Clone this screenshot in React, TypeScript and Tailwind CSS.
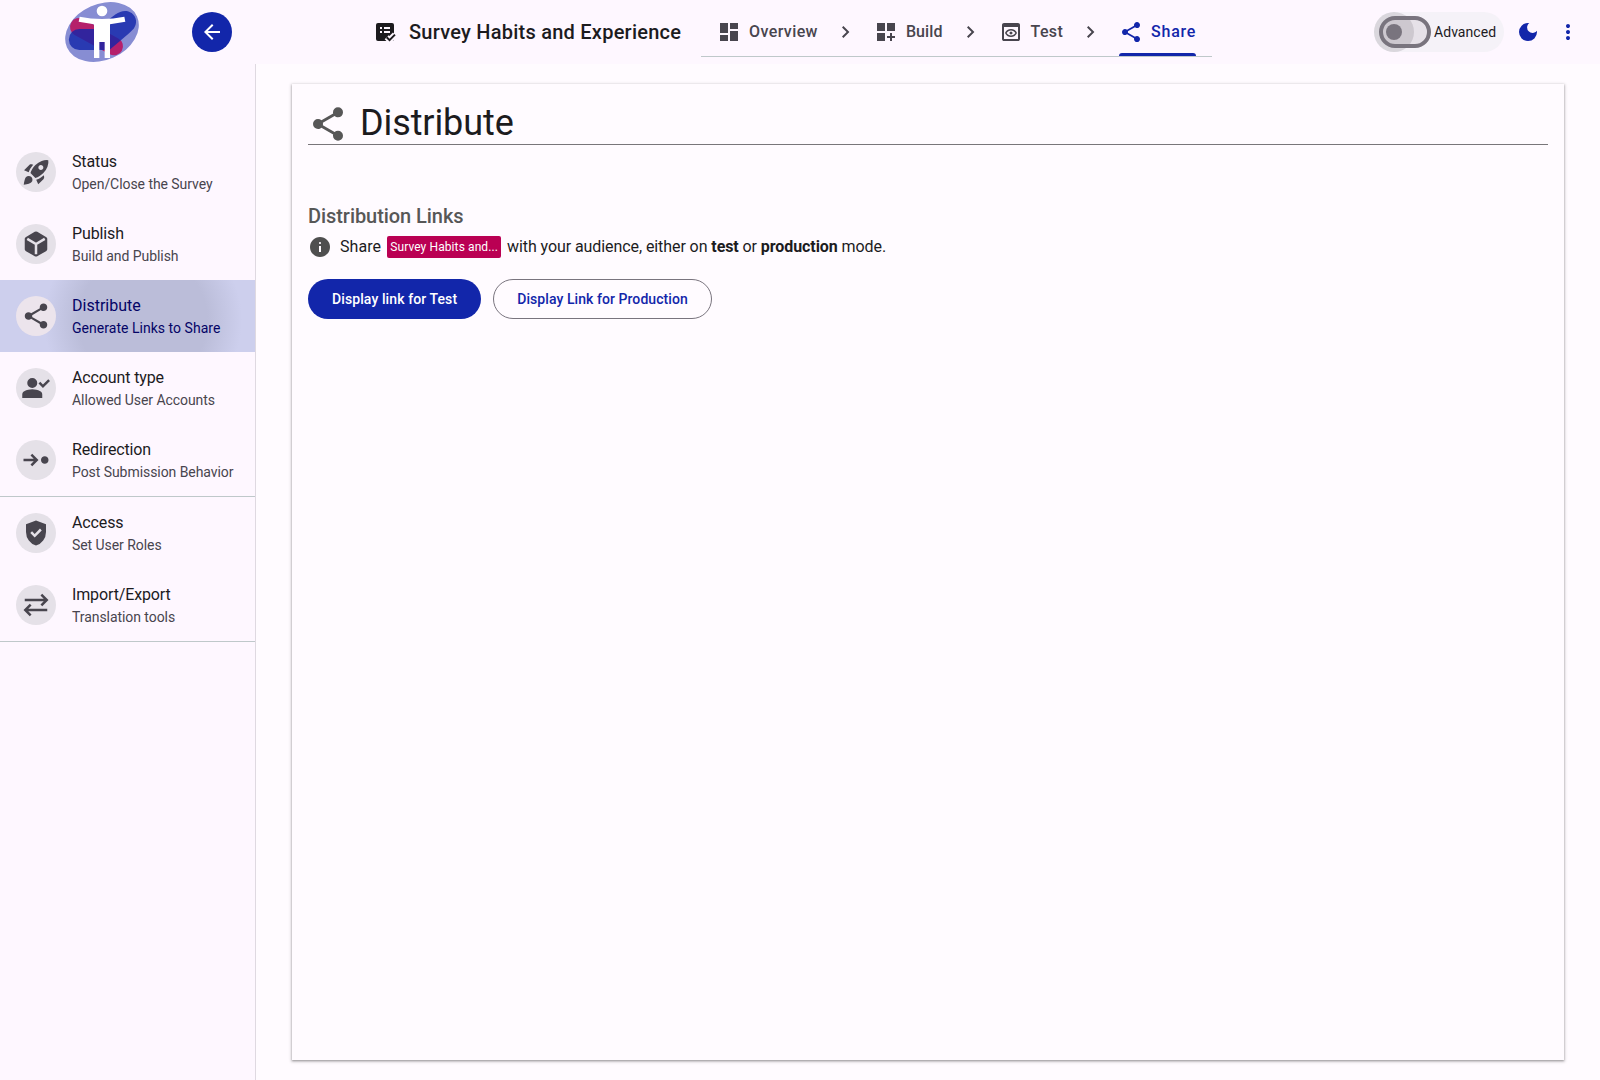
import React, { useState } from 'react';
import clsx from 'clsx';

const ICONS = {
  rocket:
    'm98-537 168-168q14-14 33-20t39-2l52 11q-54 64-85 116t-60 126L98-537Zm205 91q23-72 62.5-136T461-702q88-88 201-131.5T873-860q17 98-26 211T716-448q-55 55-120 95.5T459-289L303-446Zm276-120q23 23 56.5 23t56.5-23q23-23 23-56.5T692-679q-23-23-56.5-23T579-679q-23 23-23 56.5t23 56.5ZM551-85l-64-147q74-29 126.5-60T730-377l10 52q4 20-2 39.5T718-252L551-85ZM162-318q35-35 85-35.5t85 34.5q35 35 35 85t-35 85q-25 25-83.5 43T87-74q14-103 32-161t43-83Z',
  share:
    'M720-80q-50 0-85-35t-35-85q0-7 1-14.5t3-13.5L322-392q-17 15-38 23.5t-44 8.5q-50 0-85-35t-35-85q0-50 35-85t85-35q23 0 44 8.5t38 23.5l282-164q-2-6-3-13.5t-1-14.5q0-50 35-85t85-35q50 0 85 35t35 85q0 50-35 85t-85 35q-23 0-44-8.5T638-672L356-508q2 6 3 13.5t1 14.5q0 7-1 14.5t-3 13.5l282 164q17-15 38-23.5t44-8.5q50 0 85 35t35 85q0 50-35 85t-85 35Z',
  cube: 'M440-91 160-252q-19-11-29.5-29T120-321v-318q0-22 10.5-40t29.5-29l280-161q19-11 40-11t40 11l280 161q19 11 29.5 29t10.5 40v318q0 22-10.5 40T800-252L520-91q-19 11-40 11t-40-11Z',
  personCheck:
    'M702-480 560-622l57-56 85 85 170-170 56 57-226 226Zm-342 0q-66 0-113-47t-47-113q0-66 47-113t113-47q66 0 113 47t47 113q0 66-47 113t-113 47ZM40-160v-112q0-34 17.5-62.5T104-378q62-31 126-46.5T360-440q66 0 130 15.5T616-378q29 15 46.5 43.5T680-272v112H40Z',
  stepInto:
    'M360-280 304-337l103-103H80v-80h327L304-624l56-56 200 200-200 200Zm400-80q-50 0-85-35t-35-85q0-50 35-85t85-35q50 0 85 35t35 85q0 50-35 85t-85 35Z',
  shield:
    'm438-338 226-226-57-57-169 169-84-84-57 57 141 141Zm42 258q-139-35-229.5-159.5T160-516v-244l320-120 320 120v244q0 152-90.5 276.5T480-80Z',
  swap: 'M280-120 80-320l200-200 57 56-104 104h607v80H233l104 104-57 56Zm400-320-57-56 104-104H120v-80h607L623-784l57-56 200 200-200 200Z',
  dashboard: 'M520-600v-240h320v240H520ZM120-440v-400h320v400H120Zm400 320v-400h320v400H520Zm-400 0v-240h320v240H120Z',
  customize:
    'M120-840h320v320H120v-320Zm400 0h320v320H520v-320ZM120-440h320v320H120v-320Zm520 0h80v120h120v80H720v120h-80v-120H520v-80h120v-120Z',
  preview:
    'M200-120q-33 0-56.5-23.5T120-200v-560q0-33 23.5-56.5T200-840h560q33 0 56.5 23.5T840-760v560q0 33-23.5 56.5T760-120H200Zm0-80h560v-480H200v480Zm280-80q-82 0-146.5-44.5T240-440q29-71 93.5-115.5T480-600q82 0 146.5 44.5T720-440q-29 71-93.5 115.5T480-280Zm0-60q56 0 102-26.5t72-73.5q-26-47-72-73.5T480-540q-56 0-102 26.5T306-440q26 47 72 73.5T480-340Zm0-40q25 0 42.5-17.5T540-440q0-25-17.5-42.5T480-500q-25 0-42.5 17.5T420-440q0 25 17.5 42.5T480-380Z',
  chevron: 'M504-480 320-664l56-56 240 240-240 240-56-56 184-184Z',
  back: 'm313-440 224 224-57 56-320-320 320-320 57 56-224 224h487v80H313Z',
  moon: 'M480-120q-150 0-255-105T120-480q0-150 105-255t255-105q14 0 27.5 1t26.5 3q-41 29-65.5 75.5T444-660q0 90 63 153t153 63q55 0 101-24.5t75-65.5q2 13 3 26.5t1 27.5q0 150-105 255T480-120Z',
  more: 'M480-160q-33 0-56.5-23.5T400-240q0-33 23.5-56.5T480-320q33 0 56.5 23.5T560-240q0 33-23.5 56.5T480-160Zm0-240q-33 0-56.5-23.5T400-480q0-33 23.5-56.5T480-560q33 0 56.5 23.5T560-480q0 33-23.5 56.5T480-400Zm0-240q-33 0-56.5-23.5T400-720q0-33 23.5-56.5T480-800q33 0 56.5 23.5T560-720q0 33-23.5 56.5T480-640Z',
  info: 'M440-280h80v-240h-80v240Zm40-320q17 0 28.5-11.5T520-640q0-17-11.5-28.5T480-680q-17 0-28.5 11.5T440-640q0 17 11.5 28.5T480-600Zm0 520q-83 0-156-31.5T197-197q-54-54-85.5-127T80-480q0-83 31.5-156T197-763q54-54 127-85.5T480-880q83 0 156 31.5T763-763q54 54 85.5 127T880-480q0 83-31.5 156T763-197q-54 54-127 85.5T480-80Z',
};

type IconName = keyof typeof ICONS;

const Icon: React.FC<{ name: IconName; className?: string }> = ({ name, className }) => (
  <svg viewBox="0 -960 960 960" className={clsx('shrink-0 fill-current', className)}>
    <path d={ICONS[name]} />
    {name === 'cube' && (
      <path d="M200-642 480-480 760-642M480-480v330" fill="none" stroke="#e5e1e8" strokeWidth="80" />
    )}
  </svg>
);

const SurveyIcon: React.FC = () => (
  <svg viewBox="0 -960 960 960" className="h-6 w-6 shrink-0 fill-current">
    <rect x="120" y="-840" width="720" height="720" rx="80" />
    <path d="M280-680h80v80h-80zM280-520h80v80h-80zM440-680h240v80H440zM440-520h240v80H440z" fill="#fef7ff" />
    <path d="m548-268 113 112 218-218" fill="none" stroke="#fef7ff" strokeWidth="230" />
    <path d="m548-268 113 112 218-218" fill="none" stroke="currentColor" strokeWidth="80" />
  </svg>
);

const Logo: React.FC = () => (
  <svg viewBox="192 3 228 186" className="h-[62px] w-[76px]">
    <ellipse cx="306" cy="96" rx="115" ry="84" transform="rotate(-24 306 96)" fill="#878dd3" />
    <path d="M237 81 342 139" stroke="#b5206b" strokeWidth="54" strokeLinecap="round" />
    <path
      d="M238 87H288L347 43C362 32 380 29 395 39C411 51 412 72 401 86C392 96 372 112 328 150H238A31 31 0 0 1 238 87Z"
      fill="#1226aa"
      fillOpacity="0.8"
    />
    <circle cx="306" cy="33" r="16" fill="#fff" />
    <path d="M239 50Q306 64 373 50L376 65 330 73V174H314V126H298V174H282V73L236 65Z" fill="#fff" />
  </svg>
);

interface MenuItem {
  title: string;
  subtitle: string;
  icon: IconName;
  divider?: boolean;
}

const menuItems: MenuItem[] = [
  { title: 'Status', subtitle: 'Open/Close the Survey', icon: 'rocket' },
  { title: 'Publish', subtitle: 'Build and Publish', icon: 'cube' },
  { title: 'Distribute', subtitle: 'Generate Links to Share', icon: 'share' },
  { title: 'Account type', subtitle: 'Allowed User Accounts', icon: 'personCheck' },
  { title: 'Redirection', subtitle: 'Post Submission Behavior', icon: 'stepInto', divider: true },
  { title: 'Access', subtitle: 'Set User Roles', icon: 'shield' },
  { title: 'Import/Export', subtitle: 'Translation tools', icon: 'swap', divider: true },
];

const tabs: { label: string; icon: IconName; tracking: string }[] = [
  { label: 'Overview', icon: 'dashboard', tracking: 'tracking-[0.4px]' },
  { label: 'Build', icon: 'customize', tracking: 'tracking-[0.1px]' },
  { label: 'Test', icon: 'preview', tracking: 'tracking-[0.35px]' },
  { label: 'Share', icon: 'share', tracking: 'tracking-[0.75px]' },
];

const Sidebar: React.FC = () => {
  const [selected, setSelected] = useState('Distribute');

  return (
    <nav className="w-64 shrink-0 border-r border-[#dfd9e1] bg-[#fef7ff] pt-[72px]">
      {menuItems.map(({ title, subtitle, icon, divider }) => {
        const isActive = selected === title;
        return (
          <button
            key={title}
            onClick={() => setSelected(title)}
            className={clsx(
              'flex w-full items-center gap-4 px-4 text-left',
              divider ? 'h-[73px] border-b border-[#bfc8ca]' : 'h-[72px]',
              isActive
                ? 'bg-[#cdcfed] bg-[radial-gradient(circle_99px_at_143px_40px,#bbbdd9_65%,transparent)] text-[#040466]'
                : 'text-[#1c1b1e]'
            )}
          >
            <span
              className={clsx(
                'flex h-10 w-10 shrink-0 items-center justify-center rounded-full text-[#48454e]',
                isActive ? 'bg-[#ece4ec]' : 'bg-[#e5e1e8]'
              )}
            >
              <Icon name={icon} className="h-[30px] w-[30px]" />
            </span>
            <span className="flex flex-col whitespace-nowrap">
              <span className={clsx('text-base leading-6', !isActive && 'tracking-[-0.13px]')}>{title}</span>
              <span
                className={clsx(
                  'text-sm leading-5',
                  isActive ? 'tracking-[0.03px]' : 'tracking-[-0.06px] text-[#48454e]'
                )}
              >
                {subtitle}
              </span>
            </span>
          </button>
        );
      })}
    </nav>
  );
};

const Header: React.FC = () => {
  const [advanced, setAdvanced] = useState(false);

  return (
    <header className="flex h-16 shrink-0 items-center bg-[#fef7ff]">
      <div className="flex w-[373px] items-center pl-16">
        <Logo />
        <button className="ml-[52px] flex h-10 w-10 items-center justify-center rounded-full bg-[#1226aa] text-white">
          <Icon name="back" className="h-6 w-6" />
        </button>
      </div>
      <div className="flex w-[328px] items-center gap-3 whitespace-nowrap text-[#1c1b1e]">
        <SurveyIcon />
        <h1 className="text-xl font-medium tracking-[0.24px]">Survey Habits and Experience</h1>
      </div>
      <div className="mt-[7px] flex h-[50px] items-center gap-4 self-start border-b border-[#bfc8ca] px-4 text-[#48454e]">
        {tabs.map(({ label, icon, tracking }, i) => (
          <React.Fragment key={label}>
            {i > 0 && <Icon name="chevron" className="h-6 w-6" />}
            <div
              className={clsx(
                'relative flex h-full items-center gap-2 text-base font-medium',
                tracking,
                label === 'Share' && 'text-[#1226aa]'
              )}
            >
              <Icon name={icon} className="h-6 w-6" />
              {label}
              {label === 'Share' && (
                <span className="absolute inset-x-0 bottom-0 h-[3px] rounded-t-[3px] bg-[#1226aa]" />
              )}
            </div>
          </React.Fragment>
        ))}
      </div>
      <div className="ml-auto flex items-center pr-5 text-[#1226aa]">
        <button
          role="switch"
          aria-checked={advanced}
          onClick={() => setAdvanced(!advanced)}
          className="relative flex h-10 w-[130px] items-center rounded-full bg-[#f5f2f8] pl-[5px] text-sm text-[#1c1b1e]"
        >
          <span className="absolute left-0 top-0 h-10 w-10 rounded-full bg-[#1c1b1e]/12" />
          <span className="relative flex h-8 w-[52px] items-center rounded-full border-4 border-[#79747e] bg-[#3c1b2e]/8 pl-[3px]">
            <span className="h-4 w-4 rounded-full bg-[#79747e]" />
          </span>
          <span className="ml-[3px] tracking-[0.05px]">Advanced</span>
        </button>
        <button className="ml-3">
          <Icon name="moon" className="h-6 w-6" />
        </button>
        <button className="ml-4">
          <Icon name="more" className="h-6 w-6" />
        </button>
      </div>
    </header>
  );
};

const App: React.FC = () => {
  return (
    <div className="flex h-screen flex-col overflow-hidden bg-[#fffbff] font-[Roboto,sans-serif] text-[#1c1b1e]">
      <Header />
      <div className="flex min-h-0 flex-1">
        <Sidebar />
        <main className="flex flex-1 pt-5 pr-9 pb-5 pl-9">
          <section className="flex-1 px-4 pt-4 shadow-[0_1px_2px_0_rgba(0,0,0,0.3),0_1px_3px_1px_rgba(0,0,0,0.15)]">
            <div className="flex h-[45px] items-center gap-3 border-b border-[#79767a] pt-0.5">
              <Icon name="share" className="mt-px h-10 w-10 text-[#575757]" />
              <h2 className="text-4xl leading-[42px] tracking-[-0.1px]">Distribute</h2>
            </div>

            <h3 className="mt-[59px] text-xl leading-6 font-medium tracking-[-0.06px] text-[#575757]">
              Distribution Links
            </h3>
            <div className="mt-[7px] flex h-6 items-center whitespace-nowrap">
              <Icon name="info" className="h-6 w-6 text-[#4f4f4f]" />
              <span className="ml-2 tracking-[0.08px]">Share</span>
              <span className="mx-1.5 flex h-[22px] items-center rounded-xs bg-[#ba0053] px-[3px] text-xs tracking-[0.1px] text-white">
                Survey Habits and...
              </span>
              <span className="tracking-[-0.08px]">
                with your audience, either on <b>test</b> or <b>production</b> mode.
              </span>
            </div>

            <div className="mt-5 flex gap-3">
              <button className="h-10 rounded-full bg-[#1226aa] px-6 text-sm font-medium tracking-[0.1px] text-white">
                Display link for Test
              </button>
              <button className="h-10 rounded-full border border-[#79747e] px-[23px] text-sm font-medium tracking-[0.07px] text-[#1226aa]">
                Display Link for Production
              </button>
            </div>
          </section>
        </main>
      </div>
    </div>
  );
};

export default App;
